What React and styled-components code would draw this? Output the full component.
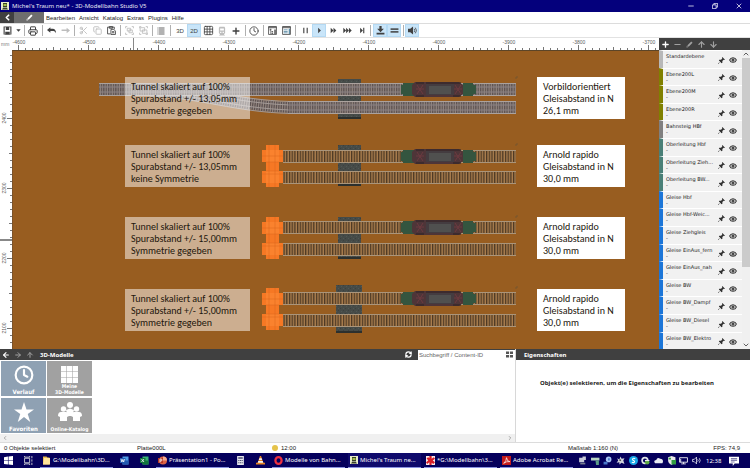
import React, { useLayoutEffect, useRef, useState } from "react";
import styled, { createGlobalStyle, css } from "styled-components";
import {
  ArrowDown,
  ArrowLeft,
  ArrowRight,
  ArrowUp,
  ChevronDown,
  ChevronLeft,
  ChevronRight,
  ChevronUp,
  Clock,
  Copy,
  Eye,
  Grid3x3,
  Minus,
  Plus,
  Printer,
  RefreshCw,
  Scissors,
  X
} from "lucide-react";

const GlobalStyle = createGlobalStyle`
  * {
    box-sizing: border-box;
  }

  body {
    margin: 0;
    background: #fff;
    color: #1a1a1a;
    font: 6px/8px "Liberation Sans", Arial, sans-serif;
  }

  button, input {
    font: inherit;
    color: inherit;
    border: 0;
    padding: 0;
    margin: 0;
    background: none;
  }

  svg {
    display: block;
    flex: none;
  }
`;

const Window = styled.div`
  display: flex;
  flex-direction: column;
  min-height: 100vh;
`;

const TitleBar = styled.header`
  display: flex;
  align-items: center;
  height: 12px;
  padding: 0 1px;
  gap: 3px;
  background: #04007c;
  color: #e8e8f4;
  font-family: "Noto Sans", sans-serif;
`;

const Title = styled.h1`
  flex: 1;
  margin: 0;
  font-size: 6px;
  font-weight: 400;
`;

const WindowButton = styled.button`
  display: flex;
  align-items: center;
  justify-content: center;
  width: 21px;
`;

const MenuBar = styled.nav`
  display: flex;
  align-items: center;
  height: 12px;
  border-bottom: 1px solid #dcdcdc;
`;

const ModeButton = styled.button`
  display: flex;
  align-items: center;
  justify-content: center;
  align-self: stretch;
  width: ${props => (props.$wide ? 30 : 14)}px;
  background: ${props => (props.$wide ? "#6e6e6e" : "#404040")};
  color: #fff;
`;

const MenuItem = styled.button`
  margin-left: ${props => (props.$first ? 2 : 4)}px;
`;

const Toolbar = styled.div`
  display: flex;
  align-items: center;
  height: 14px;
  border-bottom: 1px solid #e2e2e2;
`;

const Tool = styled.button`
  display: flex;
  align-items: center;
  justify-content: center;
  width: ${props => (props.$narrow ? 8 : 14)}px;
  height: 13px;
  color: ${props => (props.$off ? "#bdbdbd" : "#404040")};
  ${props =>
    props.$active &&
    css`
      background: #c9e5f9;
      box-shadow: inset 0 0 0 1px #b4d9f3;
    `}
`;

const Divider = styled.span`
  width: 1px;
  height: 11px;
  margin: 0 ${props => (props.$wide ? 2 : 1)}px 0 2px;
  background: #b0b0b0;
`;

const Main = styled.main`
  display: flex;
  flex: 1;
`;

const Plan = styled.section`
  display: grid;
  flex: 1;
  min-width: 0;
  grid-template-columns: 12px 1fr;
  grid-template-rows: 12px 1fr;
`;

const Corner = styled.div`
  padding: 2px 0 0 1px;
  color: #7a7a7a;
  font-size: 5px;
`;

const Ruler = styled.div`
  position: relative;
  overflow: hidden;

  svg {
    position: absolute;
    top: 0;
    left: 0;
  }

  text {
    font-size: 5px;
    fill: #5c5c5c;
    text-anchor: middle;
  }
`;

const Canvas = styled.div`
  position: relative;
  overflow: hidden;
  background: #985d20;
  border-top: 1px solid #5c4528;
  border-left: 1px solid #7c532a;
`;

const Drawing = styled.svg`
  position: absolute;
  top: -1px;
  left: -1px;
`;

const Note = styled.p`
  position: absolute;
  left: ${props => props.$x}px;
  top: ${props => props.$y}px;
  width: ${props => props.$w}px;
  margin: 0;
  padding: 4px 0 2px 6px;
  background: ${props => (props.$solid ? "#fff" : "rgba(255, 255, 255, 0.5)")};
  color: #22160c;
  font: 10px/12px Carlito, Calibri, Lato, sans-serif;
  white-space: pre;
`;

const LayerPanel = styled.aside`
  display: flex;
  flex-direction: column;
  width: 91px;
  background: #fff;
`;

const DarkBar = styled.div`
  display: flex;
  align-items: center;
  height: ${props => (props.$slim ? 11 : 12)}px;
  background: #404040;
  color: #fff;
`;

const BarButton = styled.button`
  display: flex;
  align-items: center;
  justify-content: center;
  width: 12px;
  color: ${props => (props.$dim ? "#a0a0a0" : "#fff")};
`;

const LayerBody = styled.div`
  display: flex;
  flex: 1;
`;

const LayerList = styled.ul`
  display: flex;
  flex: 1;
  flex-direction: column;
  min-width: 0;
  margin: 0;
  padding: 0;
  list-style: none;
`;

const Layer = styled.li`
  display: flex;
  flex: 1;
  padding-right: 4px;
  border-left: 4px solid ${props => props.$color};
  border-top: 1px solid #fff;
  background: #f1f1f1;
  font: 5px/6px "DejaVu Sans", sans-serif;
`;

const LayerName = styled.div`
  flex: 1;
  min-width: 0;
  padding: 2px 0 0 3px;
  white-space: nowrap;
`;

const LayerButton = styled.button`
  display: flex;
  align-items: center;
  justify-content: center;
  width: 11px;
  padding-top: 2px;
  color: #303030;
`;

const Scrollbar = styled.div`
  display: flex;
  flex-direction: ${props => (props.$vertical ? "column" : "row")};
  align-items: center;
  justify-content: space-between;
  background: #f0f0f0;
  color: #606060;
  ${props => (props.$vertical ? "width: 8px" : "height: 8px; padding: 0 2px")};
`;

const Thumb = styled.div`
  width: 8px;
  height: 70%;
  margin-bottom: auto;
  background: #cbcbcb;
`;

const Lower = styled.div`
  display: flex;
  min-height: 93px;
`;

const Catalog = styled.section`
  display: flex;
  flex: 11;
  flex-direction: column;
  border-right: 1px solid #d8d8d8;
`;

const Properties = styled.section`
  flex: 5;

  p {
    margin: 19px 0 0;
    padding-right: 12px;
    text-align: center;
    font: bold 6px/8px "Noto Sans", sans-serif;
  }
`;

const Heading = styled.h2`
  margin: 0 0 0 ${props => (props.$inset ? 8 : 4)}px;
  font: bold 6px/8px "Noto Sans", sans-serif;
`;

const Refresh = styled.button`
  margin: 0 6px 0 auto;
`;

const Search = styled.label`
  display: flex;
  align-items: center;
  width: 97px;
  height: 10px;
  padding: 0 2px 0 1px;
  background: #fff;
  color: #555;

  input {
    flex: 1;
    min-width: 0;
    outline: 0;
  }

  input::placeholder {
    color: #666;
    opacity: 1;
  }
`;

const Tiles = styled.div`
  display: grid;
  flex: 1;
  grid-template-columns: 45px 45px;
  grid-auto-rows: 36px;
  gap: 1px;
  padding: 1px 0 0 1px;
`;

const Tile = styled.button`
  display: flex;
  flex-direction: column;
  align-items: center;
  justify-content: space-between;
  padding: ${props => (props.$tight ? 5 : 4)}px 0 1px;
  background: ${props => (props.$blue ? "#8fa1b3" : "#a1a1a1")};
  border-bottom: 1px solid #fff;
  color: #fff;
  font: bold ${props => (props.$blue ? 6 : 5)}px/6px "DejaVu Sans Condensed",
    "DejaVu Sans", sans-serif;
  white-space: pre;
`;

const StatusBar = styled.footer`
  display: grid;
  grid-template-columns: 137px 135px 292px 1fr;
  align-items: center;
  height: 11px;
  padding-right: 10px;
  border-top: 1px solid #dcdcdc;

  > span:first-child {
    padding-left: 4px;
  }
`;

const StatusTime = styled.div`
  display: flex;
  align-items: center;
  gap: 3px;
`;

const StatusScale = styled.div`
  display: flex;
  justify-content: space-between;
  padding-left: 4px;
`;

const Taskbar = styled.nav`
  display: flex;
  gap: 3px;
  height: 15px;
  padding-right: 8px;
  background: #05005c;
  color: #fff;
  font-family: "Noto Sans", sans-serif;
`;

const TaskIcon = styled.button`
  display: flex;
  align-items: center;
  justify-content: center;
  width: 17px;
`;

const Task = styled.button`
  display: flex;
  align-items: center;
  gap: 2px;
  width: 73px;
  padding-left: 2px;
  border-bottom: 1px solid #8a92e0;
  background: ${props => (props.$active ? "#0f0a6c" : "none")};
  white-space: nowrap;
`;

const Tray = styled.div`
  display: flex;
  flex: 1;
  align-items: center;
  justify-content: space-around;
`;

const TaskClock = styled.time`
  align-self: center;
  width: 16px;
`;

const icon = { size: 8, strokeWidth: 2.4 };

// simple 16x16 glyph used by the tool and task buttons
const Glyph = ({ size = 9, children }) => (
  <svg
    width={size}
    height={size}
    viewBox="0 0 16 16"
    fill="currentColor"
    stroke="none"
  >
    {children}
  </svg>
);

const Pencil = () => (
  <Glyph size={7}>
    <path d="M1 15l1-4 3 3zM3 10L12 1l3 3-9 9z" />
  </Glyph>
);

const Pin = () => (
  <Glyph size={7}>
    <path d="M10 0l6 6-2 1-1-1-3 3v4l-2 1-3-3-4 5-1-1 5-4-3-3 1-2h4l3-3-1-1z" />
  </Glyph>
);

const AppLogo = () => (
  <svg width="8" height="8" viewBox="0 0 16 16">
    <path fill="#e8edc8" d="M0 0h16v16H0z" />
    <path fill="#3a4228" d="M4 2h8v10l2 3H2l2-3z" />
    <path fill="#a5c04e" d="M5 4h6v4H5z" />
    <path fill="#fff" d="M5 10h2v2H5zM9 10h2v2H9z" />
  </svg>
);

const SaveGlyph = () => (
  <Glyph>
    <path d="M1 1h14v14H1zM3 2v12h10V2h-2v5H5V2z" fillRule="evenodd" />
    <path d="M8 2h2v4H8zM4 10h8v5H4z" />
  </Glyph>
);

const Group = ({ apart }) => (
  <Glyph size={9}>
    <g fill="none" stroke="currentColor" strokeWidth="1.5">
      <path d={apart ? "M2 3h8v6H2zM6 7h8v6H6z" : "M4 4h6v5H4zM7 7h6v5H7z"} />
      <path d="M1 4V1h3M12 1h3v3M1 12v3h3M12 15h3v-3" />
    </g>
  </Glyph>
);

const Train = () => (
  <Glyph size={10}>
    <path
      fillRule="evenodd"
      d="M4 1h8l1 2v8l-2 2 2 2H3l2-2-2-2V3zm1 3v3h6V4zm0 5v2h2V9zm4 0v2h2V9z"
    />
  </Glyph>
);

const Panel = ({ tree }) => (
  <Glyph>
    <path
      fill="none"
      stroke="currentColor"
      strokeWidth="1.4"
      d="M1 1h14v14H1z"
    />
    <path d="M1 1h14v3H1z" opacity="0.7" />
    {tree ? (
      <path d="M3 5h3v3H3zM6 9h3v2H6zM6 12h3v2H6zM11 6h3v8h-3zM4 7h1v7H4z" opacity="0.8" />
    ) : (
      <path d="M3 6h7v1.500H3zM3 8.700h7v1.500H3zM3 11.500h7V13H3zM12 5h2v9h-2z" fill="#4a7f9b" />
    )}
  </Glyph>
);

const Play = ({ count = 1, end }) => (
  <Glyph>
    {Array.from({ length: count }, (_, i) => (
      <path
        key={i}
        d={`M${8 - count * 2.5 + i * 5} 3l5 5-5 5z`}
      />
    ))}
    {end && <path d="M11 3h2v10h-2z" />}
  </Glyph>
);

const Undo = ({ flip }) => (
  <Glyph>
    <path
      d={
        flip
          ? "M16 8l-6-5v3H1v3h9v4z"
          : "M0 7l6-5v3h4c4 0 6 3 6 8-2-4-4-4-6-4H6v3z"
      }
    />
  </Glyph>
);

// one unit is 70px, split in ten; returns the room that the ruler has
function useRoom(side) {
  const ref = useRef(null);
  const [room, setRoom] = useState(0);
  useLayoutEffect(() => {
    const measure = () => setRoom(Math.floor(ref.current[side]));
    const observer = new ResizeObserver(measure);
    observer.observe(ref.current);
    measure();
    return () => observer.disconnect();
  }, [side]);
  return [ref, room];
}

const range = (from, to) => {
  const list = [];
  for (let i = from; i <= to; i++) list.push(i);
  return list;
};

const tickLength = n => (n % 10 === 0 ? 5 : n % 5 === 0 ? 3 : 2);

const TopRuler = () => {
  const [ref, room] = useRoom("clientWidth");
  return (
    <Ruler ref={ref}>
      <svg width={room} height="12">
        <path
          d={range(-1, (room - 8) / 7)
            .map(n => `M${6 + n * 7}.5 12v-${tickLength(n)}`)
            .join("")}
          stroke="#777"
        />
        <path d="M121.500 0v12" stroke="#888" />
        {range(0, (room - 15) / 70).map(i => (
          <text key={i} x={7 + i * 70} y="6">
            {-4600 + i * 100}
          </text>
        ))}
      </svg>
    </Ruler>
  );
};

const SideRuler = () => {
  const [ref, room] = useRoom("clientHeight");
  return (
    <Ruler ref={ref}>
      <svg width="12" height={room}>
        <path
          d={range(-9, (room - 69) / 7)
            .map(n => `M12 ${68 + n * 7}.5h-${tickLength(n)}`)
            .join("")}
          stroke="#777"
        />
        <path d="M0 190h12" stroke="#888" strokeWidth="2" />
        {range(0, (room - 76) / 70).map(i => (
          <text key={i} transform={`translate(6 ${68 + i * 70}) rotate(-90)`}>
            {2400 - i * 100}
          </text>
        ))}
      </svg>
    </Ruler>
  );
};

const Track = ({ x, y, scale }) => (
  <g>
    <rect
      x={x}
      y={y + 1}
      width={516 - x}
      height="11"
      fill={scale ? "url(#fine)" : "url(#rapido)"}
    />
    {scale && (
      <path d={`M${x} ${y + 4}H516M${x} ${y + 9}H516`} stroke="#8b8285" />
    )}
    <path
      d={`M${x} ${y + 0.5}H516M${x} ${y + 12.5}H516`}
      stroke={scale ? "#aba29e" : "#aa957b"}
    />
  </g>
);

const Loco = ({ y }) => (
  <g transform={`translate(401 ${y})`}>
    <path d="M0 3h2V1h12v13H2v-2H0zM62 1h10v2h3v9h-3v2H62z" fill="#34553f" />
    <path d="M14 0h44l4 3v9l-4 3H14l-3-3V3z" fill="#4e3538" />
    <path d="M25 2h28v11H25z" fill="#443c40" />
    <path d="M28 4h22v8H28z" fill="#50504f" />
    <path
      d="M16 3l6 9M22 3l-6 9M54 3l6 9M60 3l-6 9M15 7h8M53 7h8"
      stroke="#6c3a40"
      strokeWidth="1"
    />
    <path d="M15 1h8M52 1h8M15 14h8M52 14h8M25 1h27" stroke="#2c2225" />
  </g>
);

const Portal = ({ y }) => (
  <g transform={`translate(262 ${y})`}>
    <path
      d="M4 0h13v5h4v12h-4v9h4v12h-4v4H4v-4H0V26h4v-9H0V5h4z"
      fill="#f67824"
    />
    <path d="M4 5h13v12H4zM4 26h13v12H4z" fill="#fa822e" />
    <path
      d="M0 11h21M0 29h21M7 0v42M13 0v42M4 17h13M4 26h13"
      stroke="#d9661d"
      strokeWidth="0.5"
      fill="none"
    />
  </g>
);

const Scene = () => (
  <Drawing width="646" height="299" viewBox="12 50 646 299">
    <defs>
      <pattern
        id="rapido"
        width="2.7"
        height="14"
        patternUnits="userSpaceOnUse"
      >
        <path d="M0 0h2.700v14H0z" fill="#ac7f4e" />
        <path d="M0 0h1.300v14H0z" fill="#4c3824" />
      </pattern>
      <pattern id="fine" width="2.4" height="14" patternUnits="userSpaceOnUse">
        <path d="M0 0h2.400v14H0z" fill="#94867f" />
        <path d="M0 0h1.300v14H0z" fill="#5c5252" />
      </pattern>
      <pattern id="stone" width="5" height="5" patternUnits="userSpaceOnUse">
        <path d="M0 0h5v5H0z" fill="#464b48" />
        <path d="M1 1h1v1H1zM3 3h1v1H3z" fill="#515854" />
        <path d="M3 0h1v1H3zM0 3h1v1H0z" fill="#3c403e" />
      </pattern>
    </defs>

    <rect x="338" y="79" width="23" height="40" fill="url(#stone)" />
    <rect x="338" y="145" width="23" height="41" fill="url(#stone)" />
    <rect x="338" y="217" width="23" height="42" fill="url(#stone)" />
    <rect x="336" y="285" width="26" height="48" fill="url(#stone)" />
    <path
      d="M338 118h23M338 185h23M338 258h23M336 332h26"
      stroke="#2c302e"
      strokeWidth="2"
    />

    {/* turnout leading into the lower track */}
    <path
      d="M150 90C200 92 235 106 290 107.500"
      stroke="#94867f"
      strokeWidth="11"
      fill="none"
    />
    <path
      d="M150 90C200 92 235 106 290 107.500"
      stroke="#5c5252"
      strokeWidth="11"
      strokeDasharray="1.300 1.100"
      fill="none"
    />
    <path
      d="M150 84C200 86 235 100 290 101.500M150 96C200 98 235 112 290 113.500M150 88C200 90 235 103 290 105M150 93C200 95 235 108 290 110"
      stroke="#a39a97"
      fill="none"
    />
    <Track scale x={99} y={83} />
    <Track scale x={288} y={101} />
    <Track x={283} y={150} />
    <Track x={283} y={171} />
    <Track x={283} y={221} />
    <Track x={283} y={243} />
    <Track x={283} y={292} />
    <Track x={283} y={314} />

    <Loco y={82} />
    <Loco y={149} />
    <Loco y={220} />
    <Loco y={291} />
    <Portal y={145} />
    <Portal y={217} />
    <Portal y={288} />
    <path
      d="M515 78h2v-2M515 145h2v-2M515 217h2v-2M515 288h2v-2"
      stroke="#77562f"
      fill="none"
    />
  </Drawing>
);

const notes = [
  { y: 26, dist: "13,05", last: "Symmetrie gegeben", n: "Vorbildorientiert", mm: "26,1" },
  { y: 94, dist: "13,05", last: "keine Symmetrie", n: "Arnold rapido", mm: "30,0" },
  { y: 166, dist: "15,00", last: "Symmetrie gegeben", n: "Arnold rapido", mm: "30,0" },
  { y: 238, dist: "15,00", last: "Symmetrie gegeben", n: "Arnold rapido", mm: "30,0" }
];

const layers = [
  ["Standardebene", "#b8b8b8"],
  ["Ebene200L", "#808000"],
  ["Ebene200M", "#808000"],
  ["Ebene200R", "#808000"],
  ["Bahnsteig HBf", "#808080"],
  ["Oberleitung Hbf", "#4a8078"],
  ["Oberleitung Zieh...", "#4a8078"],
  ["Oberleitung BW...", "#4a8078"],
  ["Gleise Hbf", "#1c76d8"],
  ["Gleise Hbf-Weic...", "#1c76d8"],
  ["Gleise Ziehgleis", "#1c76d8"],
  ["Gleise EinAus_fern", "#1c76d8"],
  ["Gleise EinAus_nah", "#1c76d8"],
  ["Gleise BW", "#1c76d8"],
  ["Gleise BW_Dampf", "#1c76d8"],
  ["Gleise BW_Diesel", "#1c76d8"],
  ["Gleise BW_Elektro", "#1c76d8"]
];

const menus = ["Bearbeiten", "Ansicht", "Katalog", "Extras", "Plugins", "Hilfe"];

const Tools = () => (
  <Toolbar>
    <Tool aria-label="Speichern"><SaveGlyph /></Tool>
    <Tool $narrow aria-label="Speichern unter">
      <Glyph size={5}><path d="M1 4h14l-7 8z" /></Glyph>
    </Tool>
    <Divider />
    <Tool aria-label="Drucken"><Printer size={10} strokeWidth={2.4} /></Tool>
    <Divider />
    <Tool aria-label="Zurück"><Undo /></Tool>
    <Tool $off aria-label="Vor"><Undo flip /></Tool>
    <Divider />
    <Tool $off aria-label="Ausschneiden"><Scissors size={9} strokeWidth={2.4} /></Tool>
    <Tool $off aria-label="Kopieren"><Copy size={9} strokeWidth={2.4} /></Tool>
    <Tool aria-label="Einfügen">
      <Glyph>
        <g fill="none" stroke="currentColor" strokeWidth="1.5">
          <path d="M6 14H1V2h12v4M4 1h6v3H4zM7 6h5l3 3v6H7zM9 10h4M9 12h4" />
        </g>
      </Glyph>
    </Tool>
    <Divider />
    <Tool $off aria-label="Gruppieren"><Group /></Tool>
    <Tool $off aria-label="Gruppierung aufheben"><Group apart /></Tool>
    <Divider />
    <Tool aria-label="Liste">
      <Glyph size={8}>
        <path
          opacity="0.8"
          d="M1 1h2v2H1zM1 5h2v2H1zM1 9h2v2H1zM1 13h2v2H1zM4 1h11v2H4zM4 5h11v2H4zM4 9h11v2H4zM4 13h11v2H4z"
        />
      </Glyph>
    </Tool>
    <Divider $wide />
    <Tool>3D</Tool>
    <Tool $active>2D</Tool>
    <Tool aria-label="Raster"><Grid3x3 size={11} strokeWidth={1.8} /></Tool>
    <Tool $off aria-label="Fahrzeug"><Train /></Tool>
    <Tool aria-label="Hinzufügen"><Plus size={10} strokeWidth={3.4} /></Tool>
    <Divider />
    <Tool aria-label="Uhr"><Clock size={10} strokeWidth={2} /></Tool>
    <Divider />
    <Tool aria-label="Baum"><Panel tree /></Tool>
    <Tool aria-label="Eigenschaften"><Panel /></Tool>
    <Divider $wide />
    <Tool aria-label="Pause">
      <Glyph><path d="M4 3h2v10H4zM10 3h2v10h-2z" /></Glyph>
    </Tool>
    <Tool $active aria-label="Start"><Play /></Tool>
    <Tool aria-label="Schneller"><Play count={2} /></Tool>
    <Tool aria-label="Sehr schnell"><Play count={3} /></Tool>
    <Tool aria-label="Ende"><Play end /></Tool>
    <Divider $wide />
    <Tool $active aria-label="Andocken">
      <Glyph><path d="M6 0h4v5h4l-6 6-6-6h4zM1 12h14v3H1z" /></Glyph>
    </Tool>
    <Tool $active aria-label="Gleise">
      <Glyph><path d="M1 4h14v3H1zM1 9h14v3H1z" opacity="0.85" /></Glyph>
    </Tool>
    <Divider />
    <Tool $active aria-label="Ton">
      <Glyph>
        <path d="M0 5h4l5-4v14l-5-4H0z" />
        <path d="M11 5q2 3 0 6M13 3q4 5 0 10" fill="none" stroke="currentColor" strokeWidth="1.4" />
      </Glyph>
    </Tool>
  </Toolbar>
);

const LayerSidebar = () => (
  <LayerPanel>
    <DarkBar>
      <BarButton aria-label="Neue Ebene"><Plus size={9} strokeWidth={3.6} /></BarButton>
      <BarButton $dim aria-label="Ebene löschen"><Minus size={9} strokeWidth={3} /></BarButton>
      <BarButton $dim aria-label="Umbenennen"><Pencil /></BarButton>
      <BarButton $dim aria-label="Nach oben"><ArrowUp size={9} strokeWidth={3} /></BarButton>
      <BarButton $dim aria-label="Nach unten"><ArrowDown size={9} strokeWidth={3} /></BarButton>
    </DarkBar>
    <LayerBody>
      <LayerList>
        {layers.map(([name, color]) => (
          <Layer key={name} $color={color}>
            <LayerName>
              {name}
              <br />-
            </LayerName>
            <LayerButton aria-label={`${name} sperren`}><Pin /></LayerButton>
            <LayerButton aria-label={`${name} anzeigen`}>
              <Eye size={8} strokeWidth={3.2} />
            </LayerButton>
          </Layer>
        ))}
      </LayerList>
      <Scrollbar $vertical>
        <ChevronUp size={8} strokeWidth={3} />
        <Thumb />
        <ChevronDown size={8} strokeWidth={3} />
      </Scrollbar>
    </LayerBody>
  </LayerPanel>
);

const OfficeIcon = ({ color, light, mark }) => (
  <svg width="9" height="9" viewBox="0 0 18 18">
    <path fill={light} d="M5 1h12v16H5z" />
    <path fill={color} d="M5 9h12v8H5zM0 4h11v10H0z" />
    <path d={mark} fill="none" stroke="#fff" strokeWidth="1.6" />
  </svg>
);

const CatalogTiles = () => (
  <Tiles>
    <Tile $blue>
      <Clock size={20} strokeWidth={2.6} />
      Verlauf
    </Tile>
    <Tile $tight>
      <Glyph size={17}>
        <path d="M0 0h5v5H0zM5.500 0h5v5h-5zM11 0h5v5h-5zM0 5.500h5v5H0zM5.500 5.500h5v5h-5zM11 5.500h5v5h-5zM0 11h5v5H0zM5.500 11h5v5h-5zM11 11h5v5h-5z" />
      </Glyph>
      {"Meine\n3D-Modelle"}
    </Tile>
    <Tile $blue>
      <Glyph size={20}>
        <path d="M8 0l2 6h6l-5 3.500 2 6.500-5-4-5 4 2-6.500L0 6h6z" />
      </Glyph>
      Favoriten
    </Tile>
    <Tile>
      <svg width="24" height="20" viewBox="0 0 24 20" fill="#fff">
        <circle cx="12" cy="3" r="3" />
        <circle cx="5.500" cy="7" r="2.700" />
        <circle cx="18.500" cy="7" r="2.700" />
        <path d="M8 8l4-1.500L16 8l-2 6h-4z" />
        <path d="M0 14q0-4 3-4h5q3 0 3 4l-2 1v4H2v-4zM13 14q0-4 3-4h5q3 0 3 4l-2 1v4h-7v-4z" />
      </svg>
      Online-Katalog
    </Tile>
  </Tiles>
);

const TrayIcons = () => (
  <Tray>
    <Glyph><path fill="#c7c9d8" d="M2 3h9v8H2zM8 1h6v6H8z" /><path fill="#777c92" d="M4 12h9v3H4z" /></Glyph>
    <Glyph><path fill="#b9d4c4" d="M0 3h15v5H0z" /><path fill="#5d9c88" d="M8 8h6v8H9z" /></Glyph>
    <Glyph><circle cx="10" cy="6" r="5" fill="#a9c5f4" /><path fill="#4b79ca" d="M1 10h7v5H1zM9 4h3v4H9z" /></Glyph>
    <Glyph><path fill="#d4d5dd" d="M2 4l4 2 2-5 2 4 5-1-2 4 2 6-5-2-4 3v-4l-5 1 3-4z" /><path fill="#555" d="M6 6h3v3H6z" /></Glyph>
    <Glyph><circle cx="8" cy="8" r="8" fill="#19a7e8" /><path d="M11 5C8 2 4 6 8 8s1 5-3 3" fill="none" stroke="#fff" strokeWidth="2" /></Glyph>
    <Glyph><circle cx="7" cy="8" r="5" fill="none" stroke="#e1e6e9" strokeWidth="3" /><circle cx="11" cy="11" r="4" fill="#5fa943" /><path fill="#eee" d="M7 7h8v2H7z" /></Glyph>
    <Glyph><path fill="#e8eaf2" d="M2 13q-4-5 2-6 2-6 7-2 5 0 5 5l-1 3z" /></Glyph>
    <Glyph><path fill="#e9e9e9" d="M2 2l6-2 7 2v6q-1 5-7 8-6-3-6-8z" /><path fill="#339e43" d="M8 7h8v8H8zM3 3h4v3H3z" /></Glyph>
    <Glyph><path fill="none" stroke="#fff" strokeWidth="1.5" d="M1 3h14v8H1zM4 14h8M8 11v3M3 5v6" /></Glyph>
    <Glyph><path fill="none" stroke="#fff" strokeWidth="1.3" d="M1 6h3l4-4v12l-4-4H1zM10 6q2 2 0 4M13 4q3 4 0 8" /></Glyph>
  </Tray>
);

const DesktopTaskbar = () => (
  <Taskbar>
    <TaskIcon aria-label="Start">
      <Glyph><path d="M0 2l7-1v6H0zM8 1l8-1v7H8zM0 8h7v7l-7-1zM8 8h8v8l-8-1z" /></Glyph>
    </TaskIcon>
    <TaskIcon aria-label="Aufgabenansicht">
      <Glyph><path fill="none" stroke="#ddd" strokeWidth="1.5" d="M1 4h9v8H1zM1 0v2h9V0M1 16v-2h9v2M14 0v4M14 6v4M14 12v4" /></Glyph>
    </TaskIcon>
    <Task>
      <svg width="9" height="9" viewBox="0 0 16 18"><path fill="#e7b94d" d="M1 1h7l2 2h4v14H1z" /><path fill="#ffe39b" d="M3 4h12v13H1z" /></svg>
      G:\Modellbahn\3D...
    </Task>
    <TaskIcon aria-label="Word">
      <OfficeIcon color="#2359b0" light="#4f9be6" mark="M2 6l1.700 6 1.800-5 1.800 5L9 6" />
    </TaskIcon>
    <TaskIcon aria-label="Excel">
      <OfficeIcon color="#12743c" light="#38b474" mark="M3 6l5 6M8 6l-5 6" />
    </TaskIcon>
    <Task>
      <svg width="9" height="9" viewBox="0 0 18 18"><circle cx="10" cy="9" r="8" fill="#dc6244" /><path fill="#f4ad94" d="M10 1a8 8 0 0 1 8 8h-8z" /><path fill="#b63622" d="M0 4h10v10H0z" /><path d="M4 13V6h2a2 2 0 0 1 0 4H4" fill="none" stroke="#fff" strokeWidth="1.600" /></svg>
      Präsentation1 - Po...
    </Task>
    <TaskIcon aria-label="Rechner">
      <Glyph><path fill="#e5e5ec" d="M2 0h12v16H2z" /><path fill="#4c4f72" d="M4 2h8v3H4zM4 7h2v2H4zM7 7h2v2H7zM10 7h2v2h-2zM4 11h2v2H4zM7 11h2v2H7zM10 11h2v2h-2z" /></Glyph>
    </TaskIcon>
    <TaskIcon aria-label="VLC">
      <Glyph><path fill="#e88422" d="M7 0h2l4 12h3v3H0v-3h3z" /><path fill="#f2f2f2" d="M6 4h4l1 3H5zM4 9h8l1 3H3z" /></Glyph>
    </TaskIcon>
    <Task>
      <Glyph><ellipse cx="8" cy="8" rx="5.500" ry="6" fill="none" stroke="#ed3040" strokeWidth="4" /></Glyph>
      Modelle von Bahn...
    </Task>
    <Task $active>
      <AppLogo />
      Michel's Traum ne...
    </Task>
    <Task>
      <Glyph><path fill="#f6eaea" d="M0 0h16v16H0z" /><path fill="#d91e28" d="M6 0h4v5l4-3 2 3-4 3 4 3-3 3-3-2v4H6v-5l-4 3-2-3 4-3-3-4 3-2 2 2z" /></Glyph>
      *G:\Modellbahn\3...
    </Task>
    <Task>
      <Glyph><path fill="#c41c1c" d="M0 0h16v16H0z" /><path d="M3 13q5-4 5-10 1 7 6 7-6-1-11 3z" fill="none" stroke="#fff" strokeWidth="1.3" /></Glyph>
      Adobe Acrobat Re...
    </Task>
    <TrayIcons />
    <TaskClock>12:38</TaskClock>
    <TaskIcon aria-label="Mitteilungen">
      <Glyph size={10}><path d="M0 1h16v11H9l-3 4v-4H0z" /><path fill="#05005c" d="M3 3h10v1H3zM3 6h10v1H3zM3 9h6v1H3z" /></Glyph>
    </TaskIcon>
  </Taskbar>
);

const App = () => {
  return (
    <Window>
      <GlobalStyle />
      <TitleBar>
        <AppLogo />
        <Title>Michel's Traum neu* - 3D-Modellbahn Studio V5</Title>
        <WindowButton aria-label="Minimieren"><Minus {...icon} /></WindowButton>
        <WindowButton aria-label="Verkleinern">
          <Glyph size={6}><path d="M1 5h10v10H1zM5 5V1h10v10h-4" fill="none" stroke="#fff" strokeWidth="2" /></Glyph>
        </WindowButton>
        <WindowButton aria-label="Schließen"><X {...icon} /></WindowButton>
      </TitleBar>
      <MenuBar>
        <ModeButton aria-label="Zurück"><ChevronLeft size={9} strokeWidth={4.5} /></ModeButton>
        <ModeButton $wide aria-label="Bearbeitungsmodus"><Pencil /></ModeButton>
        {menus.map((name, i) => (
          <MenuItem key={name} $first={i === 0}>{name}</MenuItem>
        ))}
      </MenuBar>
      <Tools />
      <Main>
        <Plan>
          <Corner>mm</Corner>
          <TopRuler />
          <SideRuler />
          <Canvas>
            <Scene />
            {notes.map(note => (
              <React.Fragment key={note.y}>
                <Note $x={112} $y={note.y} $w={125}>
                  {`Tunnel skaliert auf 100%\nSpurabstand +/- ${note.dist}mm\n${note.last}`}
                </Note>
                <Note $solid $x={524} $y={note.y} $w={88}>
                  {`${note.n}\nGleisabstand in N\n${note.mm} mm`}
                </Note>
              </React.Fragment>
            ))}
          </Canvas>
        </Plan>
        <LayerSidebar />
      </Main>
      <Lower>
        <Catalog>
          <DarkBar $slim>
            <BarButton aria-label="Zurück"><ArrowLeft size={8} strokeWidth={3.4} /></BarButton>
            <BarButton $dim aria-label="Vor"><ArrowRight size={8} strokeWidth={3} /></BarButton>
            <BarButton $dim aria-label="Aufwärts"><ArrowUp size={8} strokeWidth={3} /></BarButton>
            <Heading>3D-Modelle</Heading>
            <Refresh aria-label="Aktualisieren">
              <RefreshCw size={7} strokeWidth={4} />
            </Refresh>
            <Search>
              <input type="text" aria-label="Suche" placeholder="Suchbegriff / Content-ID" />
              <Glyph size={7}><path d="M0 1h7v6H0zM9 1h7v6H9zM0 9h7v6H0zM9 9h7v6H9z" /></Glyph>
            </Search>
          </DarkBar>
          <CatalogTiles />
          <Scrollbar>
            <ChevronLeft size={6} strokeWidth={2} />
            <ChevronRight size={6} strokeWidth={2} />
          </Scrollbar>
        </Catalog>
        <Properties>
          <DarkBar $slim>
            <Heading $inset>Eigenschaften</Heading>
          </DarkBar>
          <p>Objekt(e) selektieren, um die Eigenschaften zu bearbeiten</p>
        </Properties>
      </Lower>
      <StatusBar>
        <span>0 Objekte selektiert</span>
        <span>Platte000L</span>
        <StatusTime>
          <Glyph size={6}><circle cx="8" cy="8" r="8" fill="#e5c34a" /></Glyph>
          12:00
        </StatusTime>
        <StatusScale>
          <span>Maßstab 1:160 (N)</span>
          <span>FPS: 74,9</span>
        </StatusScale>
      </StatusBar>
      <DesktopTaskbar />
    </Window>
  );
};

export default App;
